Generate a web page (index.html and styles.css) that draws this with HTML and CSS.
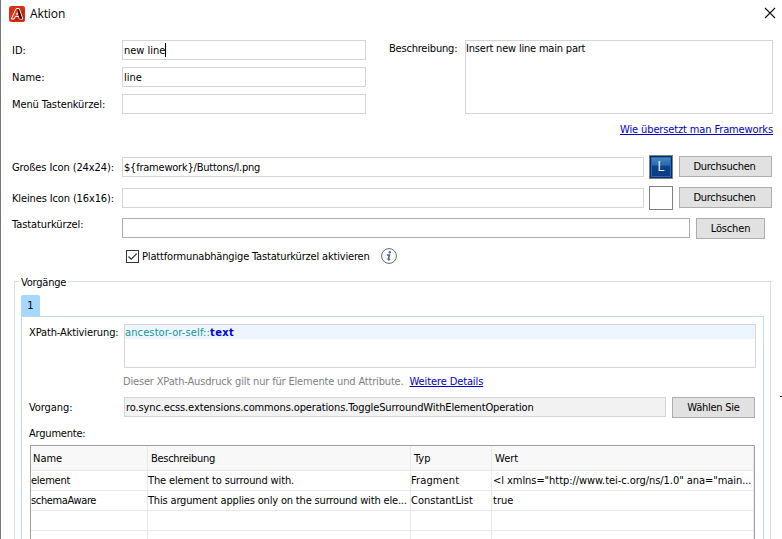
FILE: index.html
```
<!DOCTYPE html>
<html lang="de">
<head>
<meta charset="utf-8">
<title>Aktion</title>
<link rel="stylesheet" href="styles.css">
</head>
<body>
<main class="dialog">
  <header class="titlebar">
    <svg class="logo" viewBox="0 0 16 16">
      <rect width="16" height="16" rx="2.5" fill="#dc2f12"/>
      <path d="M1 15 15 4v10q0 1-1 1z" fill="#c5220e"/>
      <path d="M2.2 13 7.2 2.5h3L13.8 13H10.4l-.8-2.6H6.4L5.2 13z" fill="#e8371c" stroke="#fff" stroke-width="1"/>
      <path d="M8.4 3.2h1.6l3.2 9.5h-2.6z" fill="#1d1210"/>
      <path d="M6.8 8.8h2.2L8.3 6z" fill="#fff"/>
    </svg>
    <h1 class="title"><span class="t-title">Aktion</span></h1>
    <svg class="close" viewBox="0 0 12 12"><path d="M1 1 11 11M11 1 1 11" fill="none" stroke="#111" stroke-width="1.1"/></svg>
  </header>

  <section class="general">
    <div class="names">
      <span class="label">ID:</span><div class="field"><span class="t-id">new line</span><i class="caret"></i></div>
      <span class="label">Name:</span><div class="field">line</div>
      <span class="label t-menu">Menü Tastenkürzel:</span><div class="field"></div>
    </div>
    <span class="desc-label t-desc">Beschreibung:</span>
    <div class="desc">
      <div class="area"><span class="t-insert">Insert new line main part</span></div>
      <a class="link t-help">Wie übersetzt man Frameworks</a>
    </div>
  </section>

  <section class="icons">
    <div class="row big">
      <span class="label t-big">Großes Icon (24x24):</span>
      <div class="field grow"><span class="t-path">${framework}/Buttons/l.png</span></div>
      <div class="preview filled">L</div>
      <div class="button browse"><span class="t-browse">Durchsuchen</span></div>
    </div>
    <div class="row small">
      <span class="label t-small">Kleines Icon (16x16):</span>
      <div class="field grow"></div>
      <div class="preview"></div>
      <div class="button browse"><span class="t-browse">Durchsuchen</span></div>
    </div>
    <div class="row shortcut">
      <span class="label raised t-short">Tastaturkürzel:</span>
      <div class="field grow dark"></div>
      <div class="button delete"><span class="t-delete">Löschen</span></div>
    </div>
    <div class="check-row">
      <svg class="check" viewBox="0 0 13 13"><rect x=".5" y=".5" width="12" height="12" fill="#fff" stroke="#333"/><path d="M2.5 6.5 5.2 9.2 10.8 3.6" fill="none" stroke="#333" stroke-width="1.2"/></svg>
      <span class="t-check">Plattformunabhängige Tastaturkürzel aktivieren</span>
      <svg class="info" viewBox="0 0 16 16"><circle cx="8" cy="8" r="7.4" fill="#fff" stroke="#666" stroke-width="1"/><circle cx="8.8" cy="4.2" r="1.2" fill="#4866a8"/><path d="M6 7h2.4L7.2 11.6q0 .6 1.8-.6" fill="none" stroke="#4866a8" stroke-width="1.6"/></svg>
    </div>
  </section>

  <section class="group">
    <div class="legend"><span class="t-legend">Vorgänge</span></div>
    <div class="tab">1</div>
    <div class="panel">
      <div class="row xpath">
        <span class="label t-xpath">XPath-Aktivierung:</span>
        <div class="code"><div class="line"><span class="axis">ancestor-or-self::</span><b>text</b></div></div>
      </div>
      <div class="hint"><span class="t-hint">Dieser XPath-Ausdruck gilt nur für Elemente und Attribute.</span><a class="link t-more">Weitere Details</a></div>
      <div class="row operation">
        <span class="label t-op">Vorgang:</span>
        <div class="field grow readonly"><span class="t-class">ro.sync.ecss.extensions.commons.operations.ToggleSurroundWithElementOperation</span></div>
        <div class="button choose"><span class="t-choose">Wählen Sie</span></div>
      </div>
      <div class="args t-args">Argumente:</div>
      <div class="table">
        <div class="head"><span>Name</span><span class="t-hdesc">Beschreibung</span><span>Typ</span><span>Wert</span></div>
        <div class="tr"><span class="t-elem">element</span><span class="t-d1">The element to surround with.</span><span class="t-frag">Fragment</span><span class="t-val">&lt;l xmlns="http://www.tei-c.org/ns/1.0" ana="main...</span></div>
        <div class="tr"><span class="t-schema">schemaAware</span><span class="t-d2">This argument applies only on the surround with ele...</span><span>ConstantList</span><span>true</span></div>
        <div class="tr"><span></span><span></span><span></span><span></span></div>
        <div class="tr"><span></span><span></span><span></span><span></span></div>
      </div>
    </div>
  </section>
  <i class="speck"></i>
</main>
</body>
</html>
```
FILE: styles.css
```
* { box-sizing: border-box; }
body { margin: 0; background: #fff; }
.dialog {
  position: relative;
  width: 782px; height: 539px; overflow: hidden;
  border-left: 1px solid #77777b;
  background: #fff; color: #000;
  font: 11px/16px "DejaVu Sans Condensed", "DejaVu Sans", sans-serif;
  font-stretch: condensed;
  white-space: nowrap;
}
.titlebar { display: flex; align-items: center; height: 27px; padding: 0 6px 0 8px; }
.logo { width: 16px; height: 16px; }
.title { flex: 1; margin: 0 0 0 5px; font: 12px/16px "Open Sans", sans-serif; letter-spacing: -.1px; }
.close { width: 12px; height: 12px; margin-top: -1px; }
.field { height: 20px; border: 1px solid #d5d5d5; padding: 2px 1px; background: #fff; display: flex; }
.grow { flex: 1; }
.dark { border-color: #abadb3; }
.caret { width: 1px; height: 14px; background: #000; }
.general { display: flex; height: 115px; margin-top: 13px; padding-left: 11px; }
.names { display: grid; grid-template-columns: 110px 244px; grid-auto-rows: 20px; row-gap: 7px; align-items: center; align-content: start; }
.label { padding-top: 2px; }
.desc-label { width: 76px; margin-left: 23px; padding-top: 1px; }
.desc { width: 308px; display: flex; flex-direction: column; align-items: flex-end; }
.area { width: 308px; height: 74px; border: 1px solid #d5d5d5; }
.link { color: #0000c8; text-decoration: underline; }
.desc .link { margin-top: 8px; }
.row { display: flex; align-items: center; }
.icons .row { padding-left: 11px; }
.icons .label { width: 110px; }
.big { height: 24px; }
.small { height: 24px; margin-top: 7px; }
.shortcut { height: 21px; margin-top: 8px; }
.shortcut .field { align-self: flex-start; }
.raised { margin-top: -10px; }
.preview { width: 24px; height: 24px; margin: 0 6px 0 5px; border: 1px solid #808080; background: #fff; }
.filled { background: linear-gradient(#4b8bc6 0, #286cb0 40%, #0b4190 48%, #083a86 100%); box-shadow: inset 0 0 0 1px #062c68, inset 0 0 0 2px #2c68ad; color: #f5f8ff; font: 14px/20px "Open Sans", sans-serif; text-align: center; }
.button { height: 21px; display: flex; justify-content: center; align-items: center; background: #e1e1e1; border: 1px solid #adadad; }
.browse { width: 93px; margin-top: -1px; }
.browse span { margin-right: 2px; }
.delete { width: 69px; margin-left: 6px; }
.icons .shortcut { padding-right: 17px; }
.big, .small { padding-right: 10px; }
.check-row { display: flex; align-items: center; height: 16px; margin-top: 9px; padding-left: 125px; }
.check-row span { padding-top: 2px; }
.check { width: 13px; height: 13px; margin-right: 3px; }
.info { width: 16px; height: 16px; margin-left: 11px; }
.group { margin: 17px 0 0 13px; width: 757px; height: 270px; border: 1px solid #dcdcdc; padding-left: 6px; }
.legend { width: 49px; height: 14px; margin: -7px 0 0 -2px; padding-left: 2px; background: #fff; }
.tab { width: 19px; height: 21px; margin-top: 6px; background: #a6d8ff; border-radius: 2px 2px 0 0; line-height: 22px; text-align: center; }
.panel { width: 743px; height: 240px; border: 1px solid #bfd6eb; padding: 7px 7px 0 7px; }
.panel .label { width: 95px; }
.xpath { align-items: flex-start; }
.xpath .label { padding-top: 1px; }
.code { width: 632px; height: 44px; border: 1px solid #d5d5d5; }
.line { height: 14px; background: #edf6ff; line-height: 15px; }
.axis { color: #159494; letter-spacing: .12px; }
.line b { color: #0000e0; letter-spacing: .4px; }
.hint { display: flex; gap: 6px; margin: 6px 0 0 94px; color: #808080; }
.operation { height: 21px; margin-top: 7px; align-items: flex-start; }
.operation .label { padding-top: 3px; }
.readonly { background: #f2f2f2; }
.choose { width: 83px; margin: 0 1px 0 6px; }
.args { margin-top: 8px; }
.table { width: 725px; margin: 3px 0 0 1px; border: 1px solid #a0a0a0; border-bottom: 0; }
.head, .tr { display: grid; grid-template-columns: 117px 263px 81px 1fr; }
.head { background: #f8f8f8; }
.head span { height: 25px; padding: 5px 0 0 2px; border: solid #e8e8e8; border-width: 0 1px 1px 0; }
.head span + span { padding-left: 3px; }
.tr span { height: 20px; padding: 2px 0 0; border: solid #e8e8e8; border-width: 0 1px 1px 0; }
.tr span + span + span + span { padding-left: 1px; }
.speck { position: absolute; left: 779px; top: 396px; width: 2px; height: 1px; background: #222; }

/* Text tracking */
.t-menu, .t-big, .t-more { letter-spacing: -.11px; }
.t-desc { letter-spacing: -.2px; }
.t-insert { letter-spacing: -.2px; }
.t-help { letter-spacing: -.13px; }
.t-path { letter-spacing: -.22px; }
.t-browse { letter-spacing: -.25px; }
.t-small, .t-xpath { letter-spacing: -.13px; }
.t-short, .t-op { letter-spacing: -.08px; }
.t-delete { letter-spacing: -.15px; }
.t-check, .t-hint { letter-spacing: -.17px; }
.t-class { letter-spacing: -.12px; }
.t-args, .t-legend { letter-spacing: -.2px; }
.t-choose { letter-spacing: -.25px; }
.t-hdesc { letter-spacing: -.3px; }
.t-elem { letter-spacing: -.25px; }
.t-schema { letter-spacing: -.36px; }
.t-d1 { letter-spacing: -.13px; }
.t-d2 { letter-spacing: -.17px; }
.t-frag { letter-spacing: .12px; }
.t-val { letter-spacing: -.06px; }
```
